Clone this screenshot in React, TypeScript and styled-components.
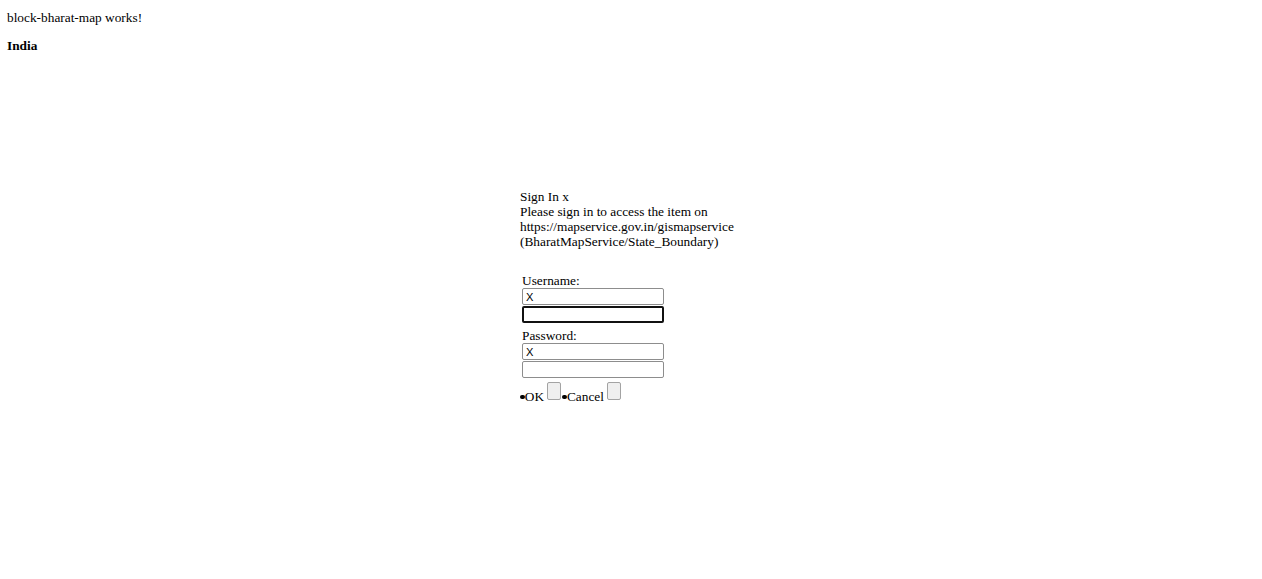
import React from "react";
import styled, { createGlobalStyle } from "styled-components";

const Global = createGlobalStyle`
  html, body { margin: 0; padding: 0; background: #fff; }
  body {
    font-family: "Liberation Serif", "Times New Roman", serif;
    font-size: 13.33px;
    line-height: 15.33px;
    color: #000;
  }
`;

const Page = styled.div`
  position: relative;
  width: 1262px;
  height: 579px;
  padding: 10px 7px 0;
  box-sizing: border-box;
`;

const Line = styled.div`
  white-space: nowrap;
`;

const Heading = styled.div`
  font-weight: bold;
  margin-top: 12.5px;
`;

const Dialog = styled.div`
  position: absolute;
  left: 520px;
  top: 188.5px;
  display: flex;
  flex-direction: column;
`;

const Form = styled.form`
  display: flex;
  flex-direction: column;
  align-items: flex-start;
  padding-left: 2px;
  margin-top: 26.5px;
`;

const Label = styled.label<{ $gap: number }>`
  display: block;
  line-height: 9.33px;
  margin-top: ${(p) => p.$gap}px;
`;

const Input = styled.input<{ $focused?: boolean; $first?: boolean }>`
  box-sizing: border-box;
  width: 142px;
  height: 17px;
  margin: ${(p) => (p.$first ? "2.5px 0 0" : "1px 0 0")};
  padding: 0 3px;
  font-family: "Liberation Sans", Arial, sans-serif;
  font-size: 11.1px;
  color: #000;
  background: #fff;
  border: ${(p) => (p.$focused ? "2px solid #111" : "1px solid #8d8d8d")};
  border-radius: 2px;
  outline: none;
`;

const Actions = styled.div`
  display: flex;
  align-items: flex-end;
  height: 18px;
  margin-top: 4px;
`;

const Action = styled.span<{ $lead?: number }>`
  display: flex;
  align-items: flex-end;
  margin-left: ${(p) => p.$lead ?? 0}px;
`;

const Bullet = styled.span`
  width: 4.5px;
  height: 4.5px;
  border-radius: 50%;
  background: #000;
  margin-bottom: 0.8px;
  margin-right: 0.3px;
`;

const ActionText = styled.span`
  line-height: 7px;
  white-space: nowrap;
`;

const EmptyButton = styled.button`
  box-sizing: border-box;
  width: 13.5px;
  height: 18px;
  margin-left: 3.3px;
  padding: 0;
  background: #efefef;
  border: 1px solid #a3a3a3;
  border-radius: 2px;
`;

export default function App() {
  return (
    <>
      <Global />
      <Page>
        <Line>block-bharat-map works!</Line>
        <Heading>India</Heading>
        <Dialog>
          <Line>Sign In x</Line>
          <Line>Please sign in to access the item on</Line>
          <Line>https://mapservice.gov.in/gismapservice</Line>
          <Line>(BharatMapService/State_Boundary)</Line>
          <Form onSubmit={(e) => e.preventDefault()}>
            <Label $gap={0}>Username:</Label>
            <Input $first defaultValue="X" />
            <Input $focused />
            <Label $gap={8.3}>Password:</Label>
            <Input $first defaultValue="X" />
            <Input type="password" />
          </Form>
          <Actions>
            <Action>
              <Bullet />
              <ActionText>OK</ActionText>
              <EmptyButton type="button" />
            </Action>
            <Action $lead={1.3}>
              <Bullet />
              <ActionText>Cancel</ActionText>
              <EmptyButton type="button" />
            </Action>
          </Actions>
        </Dialog>
      </Page>
    </>
  );
}
